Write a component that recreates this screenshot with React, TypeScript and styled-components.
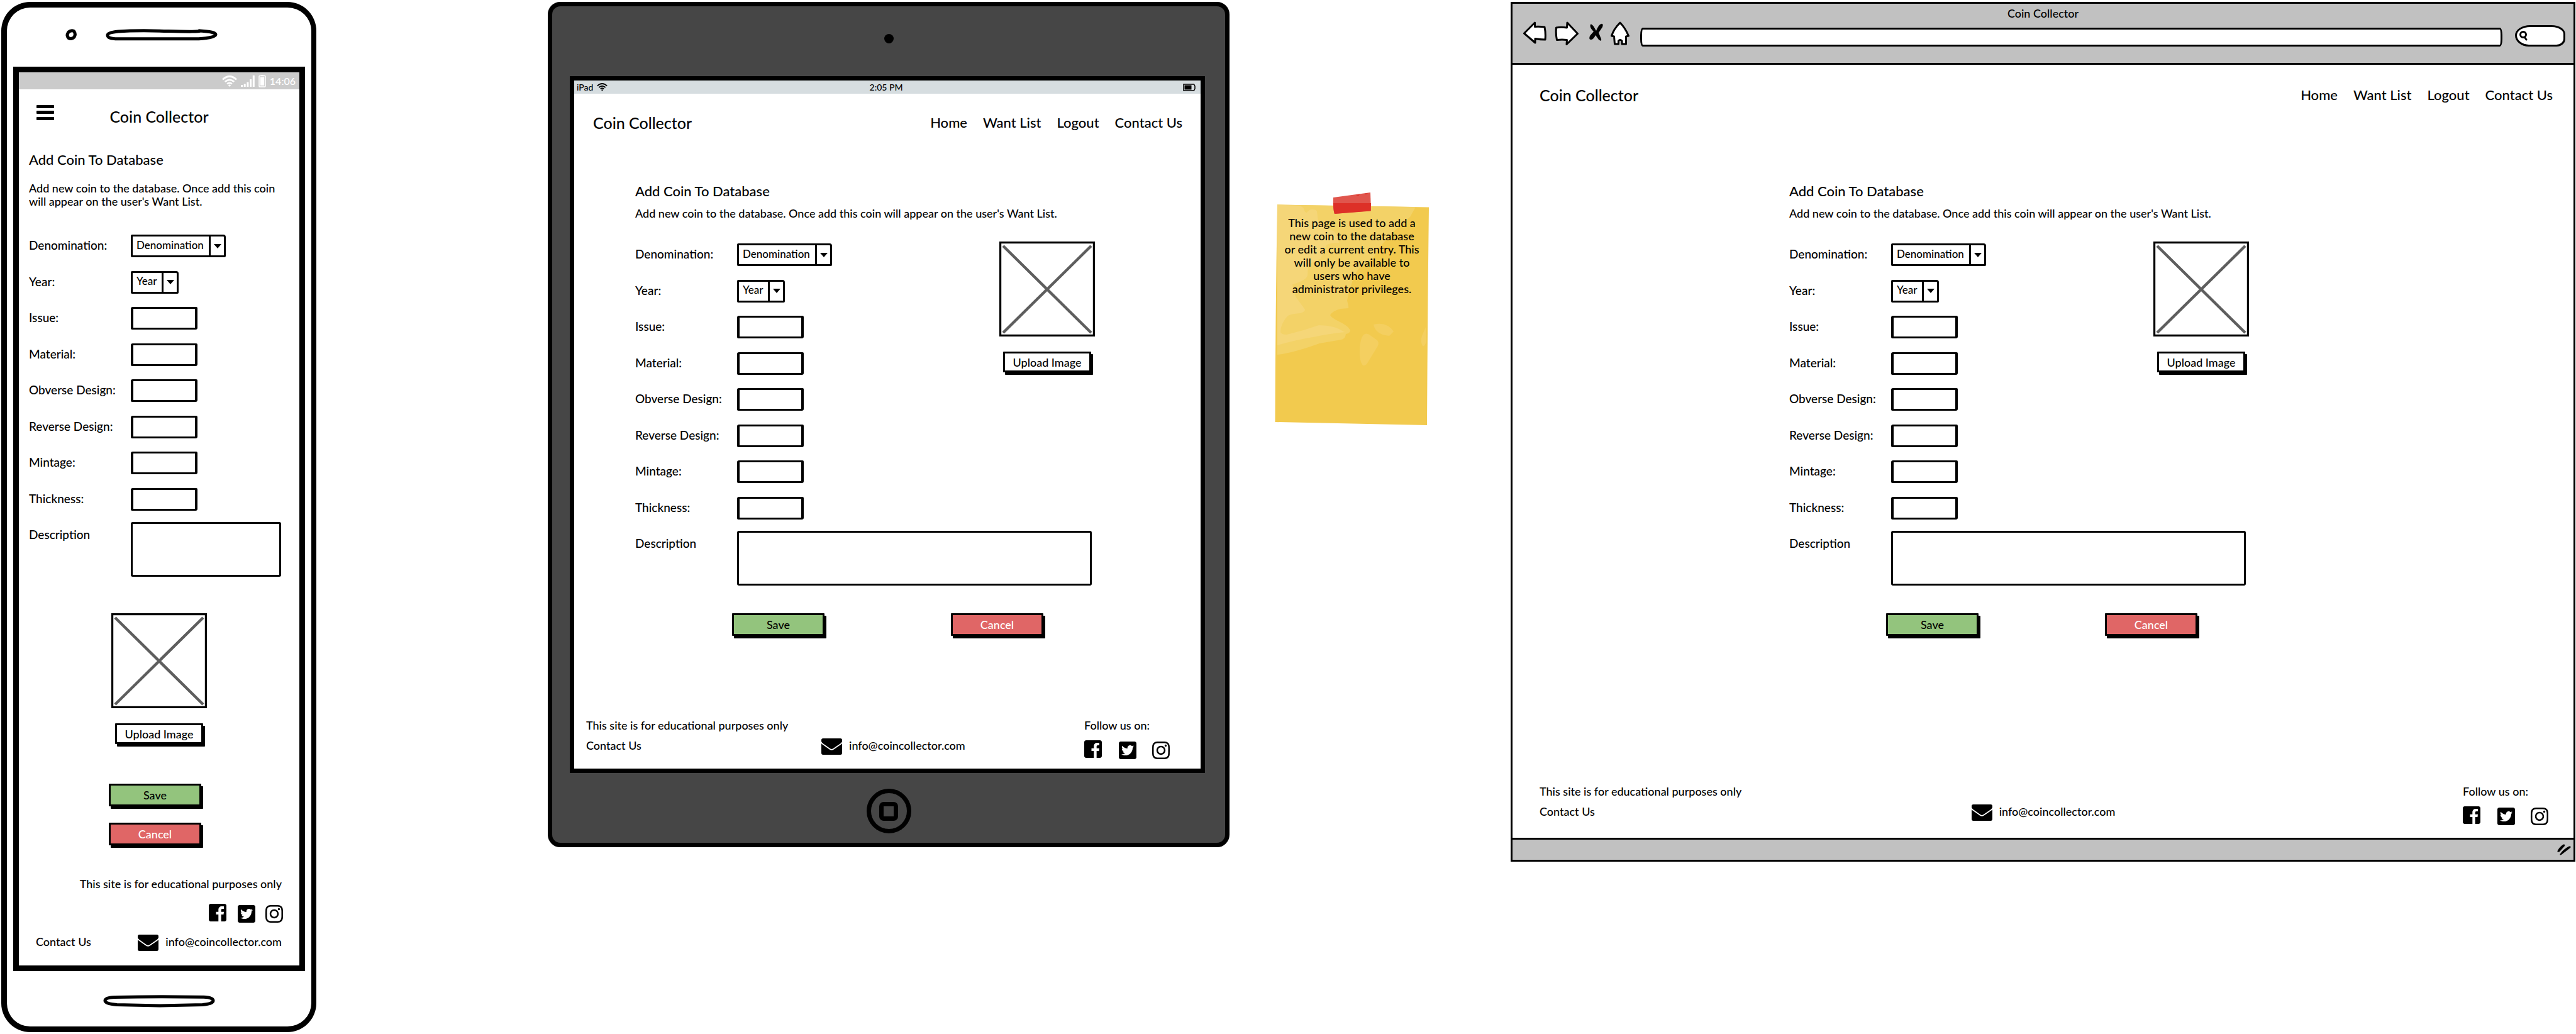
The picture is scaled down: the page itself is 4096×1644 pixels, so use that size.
import React, { useId } from 'react';
import styled, { createGlobalStyle, css } from 'styled-components';
import { FaInstagram, FaTwitterSquare } from 'react-icons/fa';

const ink = '#000';
const chrome = '#c1c1c1';

const GlobalStyle = createGlobalStyle`
  *, *::before, *::after { box-sizing: border-box; }
  body {
    margin: 0;
    background: #fff;
    color: ${ink};
    font: 500 18px/24px Lato, "Liberation Sans", sans-serif;
  }
  h1, h2, p { margin: 0; font-weight: 500; }
  svg { display: block; flex: none; }
  a { color: inherit; text-decoration: none; }
  button, input, select, textarea { font: inherit; color: inherit; margin: 0; }
`;

/* ---------- board ---------- */

const Board = styled.main`
  display: grid;
  grid-template-columns: 501fr 368fr 1084fr 72fr 245fr 130fr 1693fr;
  align-items: start;
  padding: 3px 1px 3px 2px;
`;

/* ---------- shared page parts ---------- */

const Brand = styled.h1`
  font-size: 25px;
  line-height: 36px;
  white-space: nowrap;
`;

const Heading = styled.h2`
  font-size: 22px;
  line-height: 26px;
`;

const Intro = styled.p<{ $gap: number }>`
  margin-top: ${p => p.$gap}px;
  line-height: 21px;
`;

const FieldRows = styled.div`
  display: grid;
  align-content: space-between;
  height: 439px;
`;

const Row = styled.div`
  display: grid;
  grid-template-columns: 162px minmax(0, 1fr);
  align-items: center;
  justify-items: start;
`;

const DescriptionRow = styled(Row)`
  align-items: start;
  margin-top: 18px;
`;

const Label = styled.label<{ $top?: boolean }>`
  font-size: 19px;
  white-space: nowrap;
  ${p => (p.$top ? css`padding-top: 8px;` : css`padding-bottom: 2px;`)}
`;

const TextInput = styled.input`
  width: 106px;
  height: 36px;
  padding: 0 8px;
  border: 4px solid ${ink};
  border-width: 3px 4px;
  border-radius: 3px 2px 3px 2px;
  background: #fff;
  outline: none;
`;

const TextArea = styled.textarea<{ $width: string }>`
  display: block;
  width: ${p => p.$width};
  height: 87px;
  padding: 8px;
  border: 3px solid ${ink};
  border-radius: 3px;
  background: #fff;
  resize: none;
  outline: none;
`;

const SelectBox = styled.div<{ $width: number }>`
  display: grid;
  grid-template-columns: 1fr 21px;
  width: ${p => p.$width}px;
  height: 36px;
  border: 3px solid ${ink};
  border-radius: 2px 4px 2px 2px;
`;

const NativeSelect = styled.select`
  grid-area: 1 / 1 / 2 / 3;
  width: 100%;
  padding: 0 0 3px 6px;
  border: 0;
  background: transparent;
  font-size: 17px;
  appearance: none;
  outline: none;
`;

const SelectArrow = styled.span`
  grid-area: 1 / 2 / 2 / 3;
  display: grid;
  place-items: center;
  margin-left: -3px;
  border-left: 3px solid ${ink};
  pointer-events: none;
`;

const tones = {
  plain: css`background: #fff; color: ${ink};`,
  save: css`background: #93c47d; color: ${ink};`,
  cancel: css`background: #e06666; color: #fff;`,
};

const Button = styled.button<{ $tone: keyof typeof tones }>`
  width: ${p => (p.$tone === 'plain' ? 140 : 147)}px;
  height: ${p => (p.$tone === 'plain' ? 33 : 36)}px;
  padding: 0;
  border: 3px solid ${ink};
  border-radius: 1px;
  box-shadow: 3px 4px 0 ${ink};
  line-height: 24px;
  white-space: nowrap;
  ${p => tones[p.$tone]}
`;

const Media = styled.div`
  display: flex;
  flex-direction: column;
  align-items: center;
  gap: 24px;
`;

const Social = styled.div<{ $gap: number }>`
  display: flex;
  gap: ${p => p.$gap}px;
`;

const IconLink = styled.a`
  display: grid;
  place-items: center;
  width: 28px;
  height: 28px;
`;

const Mail = styled.a`
  display: flex;
  gap: 11px;
  line-height: 22px;
`;

/* ---------- drawings ---------- */

const FacebookMark = () => (
  <svg width="28" height="28" viewBox="0 32 448 448" aria-hidden="true">
    <path d="M448 80v352c0 26.500-21.500 48-48 48h-85.300V302.800h60.600l8.700-67.600h-69.300V192c0-19.600 5.400-32.900 33.500-32.900H384V98.700c-6.200-.8-27.400-2.700-52.200-2.700-51.600 0-87 31.500-87 89.400v49.900H184v67.600h60.900V480H48c-26.500 0-48-21.500-48-48V80c0-26.500 21.500-48 48-48h352c26.500 0 48 21.500 48 48z" />
  </svg>
);

const EnvelopeMark = () => (
  <svg width="33" height="26" viewBox="0 0 99 72" preserveAspectRatio="none" aria-hidden="true">
    <rect width="99" height="72" rx="8" />
    <path d="M-2 15Q2 22 7 25L41 47Q49 52 57 47L92 25Q97 22 101 15" fill="none" stroke="#fff" strokeWidth="5" />
  </svg>
);

const WifiMark = ({ width, color }: { width: number; color: string }) => (
  <svg width={width} height={width * 0.75} viewBox="0 0 24 18" aria-hidden="true">
    <g fill="none" stroke={color} strokeWidth="2.700">
      <path d="M1 6.500Q12-3.500 23 6.500" />
      <path d="M4.700 10Q12 3.700 19.300 10" />
      <path d="M8.200 13.400Q12 10.200 15.800 13.400" />
    </g>
    <path d="M9.800 15.400Q12 13.600 14.200 15.400L12 18z" fill={color} />
  </svg>
);

const SignalMark = () => (
  <svg width="22" height="18" viewBox="0 0 22 18" fill="#fff" aria-hidden="true">
    <path d="M0 15h3v3H0zM4.700 13.500h3V18h-3zM9.400 10.500h3V18h-3zM14.100 6h3v12h-3zM18.800 0h3v18h-3z" />
  </svg>
);

const PhoneBatteryMark = () => (
  <svg width="12" height="21" viewBox="0 0 12 21" aria-hidden="true">
    <path d="M4 1h4v2H4z" fill="#fff" />
    <rect x="1" y="2.500" width="10" height="17.500" rx="1" fill="none" stroke="#fff" strokeWidth="1.500" />
    <rect x="2.800" y="4.500" width="6.400" height="13.500" fill="#fff" />
  </svg>
);

const TabletBatteryMark = () => (
  <svg width="20" height="12" viewBox="0 0 20 12" aria-hidden="true">
    <path d="M1 1h16.500l1.500 3v4l-1.500 3H1z" fill="none" stroke="#000" strokeWidth="1.500" />
    <rect x="2.500" y="2.500" width="11" height="7" />
  </svg>
);

const MenuMark = () => (
  <svg width="28" height="24" viewBox="0 0 28 24" aria-hidden="true">
    <rect width="28" height="5" rx="1" />
    <rect y="9" width="28" height="5" rx="1" />
    <rect y="19" width="28" height="5" rx="1" />
  </svg>
);

const PlaceholderImage = () => (
  <svg width="152" height="151" viewBox="0 0 152 151" role="img" aria-label="Coin image placeholder">
    <rect x="1.500" y="1.500" width="149" height="148" fill="#fff" stroke="#000" strokeWidth="3.400" />
    <path d="M6 7L146 145M146 7L6 145" stroke="#5e5e5e" strokeWidth="4.500" />
  </svg>
);

const EarpieceMark = () => (
  <svg width="178" height="19" viewBox="0 0 178 19" fill="none" stroke="#000" strokeWidth="5" aria-hidden="true">
    <path d="M20 4Q50 2 100 3.500T150 3Q175 4.500 175 9Q174 14 148 15.800H20Q3 16 3 10Q3 5.500 20 4z" />
  </svg>
);

const HomeBarMark = () => (
  <svg width="178" height="20" viewBox="0 0 178 20" fill="none" stroke="#000" strokeWidth="5" aria-hidden="true">
    <path d="M18 3.500Q90 2 160 3.300Q175 4 175 9Q175 14 158 15.500L90 17L22 15.500Q3 14 3 9Q3 4 18 3.500z" />
  </svg>
);

const PhoneCameraMark = () => (
  <svg width="18" height="18" viewBox="0 0 18 18" fill="none" stroke="#000" strokeWidth="5" aria-hidden="true">
    <path d="M5 5Q9 1.500 13.500 3.500Q17 8 14 13Q10 17 5 14.500Q1 10 5 5z" />
  </svg>
);

const BackMark = () => (
  <svg width="38" height="36" viewBox="0 0 38 36" fill="#fff" stroke="#000" strokeWidth="3" strokeLinejoin="round" aria-hidden="true">
    <path d="M1.500 19L18.500 2V8.500Q26 8 34 9Q36 19 35 29Q27 29 19 27.500V34Z" />
  </svg>
);

const ForwardMark = () => (
  <svg width="38" height="38" viewBox="0 0 38 38" fill="#fff" stroke="#000" strokeWidth="3" strokeLinejoin="round" aria-hidden="true">
    <path d="M36.500 19.500L20 2L19.500 10Q10 8.500 2.500 10Q1.500 20 3.500 29.500Q12 28.500 19.500 29.500L19 36.500Z" />
  </svg>
);

const StopMark = () => (
  <svg width="27" height="36" viewBox="0 0 27 36" aria-hidden="true">
    <path d="M7 5Q8 3 12 8L16 15Q20 5 24 4Q28 3 26 9L20 18L24 28Q25 33 20 29L15 22Q11 30 7 29Q4 29 6 23L12 16Q5 10 7 5z" />
  </svg>
);

const HomeMark = () => (
  <svg width="30" height="38" viewBox="0 0 30 38" fill="#fff" stroke="#000" strokeWidth="3" strokeLinejoin="round" aria-hidden="true">
    <path d="M15 2Q23 10 28.500 23L24.500 24V36H18V31Q15 28 12.500 31V36H6.500L5.500 24L1.500 23Q5 12 15 2z" />
  </svg>
);

const ResizeMark = () => (
  <svg width="22" height="18" viewBox="0 0 22 18" aria-hidden="true">
    <path d="M10 .5Q13 0 12 3L4 12Q0 14 .5 11Q4 4 10 .5zM19 3.500Q23 3 21 6L8 16Q4 19 4.500 16Q10 8 19 3.500z" />
  </svg>
);

/* ---------- form pieces ---------- */

const textFields = ['Issue:', 'Material:', 'Obverse Design:', 'Reverse Design:', 'Mintage:', 'Thickness:'];
const choices: [string, string, number][] = [
  ['Denomination:', 'Denomination', 151],
  ['Year:', 'Year', 76],
];

function CoinFields({ descriptionWidth, media }: { descriptionWidth: string; media?: React.ReactNode }) {
  const id = useId();
  return (
    <>
      <FormTop $split={Boolean(media)}>
        <FieldRows>
          {choices.map(([label, value, width]) => (
            <Row key={label}>
              <Label htmlFor={id + label}>{label}</Label>
              <SelectBox $width={width}>
                <NativeSelect id={id + label} defaultValue={value}>
                  <option>{value}</option>
                </NativeSelect>
                <SelectArrow>
                  <svg width="12" height="7" viewBox="0 0 12 7" aria-hidden="true"><path d="M0 0h12L6 7z" /></svg>
                </SelectArrow>
              </SelectBox>
            </Row>
          ))}
          {textFields.map(label => (
            <Row key={label}>
              <Label htmlFor={id + label}>{label}</Label>
              <TextInput id={id + label} type="text" />
            </Row>
          ))}
        </FieldRows>
        {media}
      </FormTop>
      <DescriptionRow>
        <Label $top htmlFor={id + 'description'}>Description</Label>
        <TextArea $width={descriptionWidth} id={id + 'description'} />
      </DescriptionRow>
    </>
  );
}

const FormTop = styled.div<{ $split: boolean }>`
  display: grid;
  grid-template-columns: ${p => (p.$split ? 'minmax(0, 1fr) 152px' : 'minmax(0, 1fr)')};
  ${FieldRows} { margin-top: 3px; }
`;

const CoinMedia = () => (
  <Media>
    <PlaceholderImage />
    <Button type="button" $tone="plain">Upload Image</Button>
  </Media>
);

const SocialLinks = ({ gap }: { gap: number }) => (
  <Social $gap={gap}>
    <IconLink href="#facebook" aria-label="Facebook"><FacebookMark /></IconLink>
    <IconLink href="#twitter" aria-label="Twitter"><FaTwitterSquare size={32} /></IconLink>
    <IconLink href="#instagram" aria-label="Instagram"><FaInstagram size={32} /></IconLink>
  </Social>
);

const MailLink = () => (
  <Mail href="mailto:info@coincollector.com"><EnvelopeMark />info@coincollector.com</Mail>
);

/* ---------- wide page (tablet and browser) ---------- */

const PageHeader = styled.header<{ $pad: string }>`
  display: flex;
  justify-content: space-between;
  align-items: center;
  padding: ${p => p.$pad};
`;

const Nav = styled.nav`
  display: flex;
  gap: 25px;
  font-size: 22px;
  line-height: 36px;
  white-space: nowrap;
`;

const WideForm = styled.form<{ $pad: string }>`
  padding: ${p => p.$pad};
  > * { max-width: 731px; }
  ${FormTop} { margin-top: 34px; }
`;

const Actions = styled.div`
  display: flex;
  gap: 201px;
  margin-top: 44px;
  padding-left: 154px;
`;

const PageFooter = styled.footer<{ $pad: string; $columns: string }>`
  display: grid;
  grid-template-columns: ${p => p.$columns};
  align-items: start;
  padding: ${p => p.$pad};
  ${Mail} { margin-top: 33px; }
`;

const FooterNotes = styled.div`
  display: grid;
  gap: 8px;
  justify-items: start;
  white-space: nowrap;
`;

const Follow = styled.div`
  display: grid;
  gap: 12px;
  justify-self: end;
`;

interface WideProps { header: string; form: string; footer: string; columns: string }

function WidePage({ header, form, footer, columns }: WideProps) {
  return (
    <>
      <PageHeader $pad={header}>
        <Brand>Coin Collector</Brand>
        <Nav>
          {['Home', 'Want List', 'Logout', 'Contact Us'].map(item => <a key={item} href="#">{item}</a>)}
        </Nav>
      </PageHeader>
      <WideForm $pad={form}>
        <Heading>Add Coin To Database</Heading>
        <Intro $gap={12}>Add new coin to the database. Once add this coin will appear on the user's Want List.</Intro>
        <CoinFields descriptionWidth="564px" media={<CoinMedia />} />
        <Actions>
          <Button type="button" $tone="save">Save</Button>
          <Button type="button" $tone="cancel">Cancel</Button>
        </Actions>
      </WideForm>
      <PageFooter $pad={footer} $columns={columns}>
        <FooterNotes>
          <p>This site is for educational purposes only</p>
          <a href="#">Contact Us</a>
        </FooterNotes>
        <MailLink />
        <Follow>
          <p>Follow us on:</p>
          <SocialLinks gap={25} />
        </Follow>
      </PageFooter>
    </>
  );
}

/* ---------- phone ---------- */

const PhoneBody = styled.section`
  grid-column: 1;
  padding: 0 10px;
  border: 9px solid ${ink};
  border-right-width: 8px;
  border-radius: 46px;
  background: #fff;
`;

const PhoneTop = styled.div`
  display: flex;
  gap: 46px;
  height: 94px;
  padding: 34px 0 0 83px;
`;

const PhoneBottom = styled.div`
  display: flex;
  justify-content: center;
  height: 88px;
  padding-top: 38px;
`;

const PhoneScreen = styled.div`
  border: 9px solid ${ink};
`;

const PhoneStatus = styled.div`
  display: flex;
  justify-content: flex-end;
  align-items: center;
  gap: 6px;
  height: 27px;
  padding-right: 6px;
  background: #cbcbcb;
  color: #fff;
  font-size: 16px;
`;

const PhoneHeader = styled.header`
  display: grid;
  grid-template-columns: 1fr auto 1fr;
  align-items: start;
  padding: 25px 28px 0;
`;

const MenuButton = styled.button`
  justify-self: start;
  padding: 0;
  border: 0;
  background: none;
`;

const PhoneForm = styled.form`
  padding-top: 38px;
  ${FormTop} { margin-top: 39px; }
`;

const PhoneFields = styled.div`
  padding: 0 29px 0 16px;
`;

const PhoneMedia = styled.div`
  padding-top: 58px;
`;

const PhoneActions = styled.div`
  display: flex;
  flex-direction: column;
  align-items: center;
  gap: 26px;
  padding: 63px 29px 0 16px;
`;

const PhoneFooter = styled.footer`
  display: flex;
  flex-direction: column;
  align-items: flex-end;
  padding: 49px 28px 23px 27px;
  ${Social} { margin-top: 20px; }
`;

const PhoneContact = styled.div`
  display: flex;
  justify-content: space-between;
  align-self: stretch;
  margin-top: 21px;
  line-height: 22px;
`;

function Phone() {
  return (
    <PhoneBody>
      <PhoneTop><PhoneCameraMark /><EarpieceMark /></PhoneTop>
      <PhoneScreen>
        <PhoneStatus>
          <WifiMark width={24} color="#fff" /><SignalMark /><PhoneBatteryMark /><span>14:06</span>
        </PhoneStatus>
        <PhoneHeader>
          <MenuButton type="button" aria-label="Menu"><MenuMark /></MenuButton>
          <Brand>Coin Collector</Brand>
        </PhoneHeader>
        <PhoneForm>
          <PhoneFields>
            <Heading>Add Coin To Database</Heading>
            <Intro $gap={22}>Add new coin to the database. Once add this coin will appear on the user's Want List.</Intro>
            <CoinFields descriptionWidth="100%" />
          </PhoneFields>
          <PhoneMedia><CoinMedia /></PhoneMedia>
          <PhoneActions>
            <Button type="button" $tone="save">Save</Button>
            <Button type="button" $tone="cancel">Cancel</Button>
          </PhoneActions>
        </PhoneForm>
        <PhoneFooter>
          <p>This site is for educational purposes only</p>
          <SocialLinks gap={16} />
          <PhoneContact>
            <a href="#">Contact Us</a>
            <MailLink />
          </PhoneContact>
        </PhoneFooter>
      </PhoneScreen>
      <PhoneBottom><HomeBarMark /></PhoneBottom>
    </PhoneBody>
  );
}

/* ---------- tablet ---------- */

const TabletBody = styled.section`
  grid-column: 3;
  padding: 0 32px 0 28px;
  border: 7px solid ${ink};
  border-radius: 20px;
  background: #464646;
`;

const TabletTop = styled.div`
  display: grid;
  justify-content: center;
  height: 111px;
  padding: 44px 0 0 4px;
`;

const TabletLens = styled.span`
  width: 15px;
  height: 19px;
  height: 15px;
  border-radius: 50%;
  background: ${ink};
`;

const TabletScreen = styled.div`
  border: 7px solid ${ink};
  background: #fff;
`;

const TabletStatus = styled.div`
  display: grid;
  grid-template-columns: 1fr auto 1fr;
  align-items: center;
  height: 21px;
  padding: 0 8px 0 4px;
  background: #d6dde0;
  font-size: 14px;
  line-height: 20px;
`;

const Carrier = styled.span`
  display: flex;
  align-items: center;
  gap: 6px;
`;

const StatusEnd = styled.span`
  justify-self: end;
`;

const TabletBottom = styled.div`
  display: grid;
  justify-content: center;
  height: 111px;
  padding: 25px 0 0 4px;
`;

const HomeButton = styled.button`
  display: grid;
  place-items: center;
  width: 71px;
  height: 71px;
  padding: 0;
  border: 7px solid ${ink};
  border-radius: 50%;
  background: none;
`;

const HomeSquare = styled.span`
  width: 30px;
  height: 30px;
  border: 7px solid ${ink};
  border-radius: 7px;
`;

function Tablet() {
  return (
    <TabletBody>
      <TabletTop><TabletLens /></TabletTop>
      <TabletScreen>
        <TabletStatus>
          <Carrier>iPad<WifiMark width={17} color="#000" /></Carrier>
          <span>2:05 PM</span>
          <StatusEnd><TabletBatteryMark /></StatusEnd>
        </TabletStatus>
        <WidePage header="28px 29px 0 30px" form="78px 20px 0 97px" footer="130px 51px 17px 19px" columns="374px auto 1fr" />
      </TabletScreen>
      <TabletBottom>
        <HomeButton type="button" aria-label="Home"><HomeSquare /></HomeButton>
      </TabletBottom>
    </TabletBody>
  );
}

/* ---------- sticky note ---------- */

const Note = styled.aside`
  grid-column: 5;
  display: grid;
  justify-items: center;
  margin-top: 303px;
  > * { grid-area: 1 / 1; }
`;

const NoteText = styled.p`
  max-width: 216px;
  padding-top: 38px;
  line-height: 21px;
  text-align: center;
`;

function StickyNote() {
  return (
    <Note>
      <svg width="245" height="371" viewBox="0 0 245 371" aria-hidden="true">
        <path d="M4 19.500L245 23.500Q243 190 242 370L.5 365Q1 190 4 19.500z" fill="#f2ca4e" />
        <path d="M4 19.500L224 23L215 39L188 63L165 89Q160 100 156 105Q138 116 132 123Q124 135 122 146Q117 160 115 172Q118 183 117 184L105 185Q92 188 88 195Q90 199 100 204Q117 212 120 219Q120 224 113 225Q112 233 106 234L71 240Q30 255 4 258z" fill="#f3d267" />
        <path d="M4 19.500L40 21Q47 24 47 29Q49 33 51 32Q56 26 60 27Q66 27 67 30L69 46Q73 55 93 61Q100 66 102 80Q86 80 82 84Q78 95 73 105Q58 112 53 115L52 132Q50 140 28 146Q29 158 34 167L48 186Q48 190 40 192Q25 193 21 196Q10 207 9 221Q9 226 19 226Q45 220 70 211Q95 211 111 222Q85 225 66 229Q30 235 4 243z" fill="#f5d678" />
        <path d="M157 210Q178 205 189 221L182 228Q160 226 157 210zM143 225Q148 223 153 228L163 235Q167 240 162 247L148 270Q145 276 140 275Q134 268 135 249Q136 229 143 225zM240 214L241 237Q238 246 235 244Q231 237 234 228z" fill="#f4cf60" />
        <path d="M93 8L152 0L153 29L95 34Q92 26 93 8z" fill="#e0554c" />
        <path d="M93 17H153L152.500 29.500L95 34Q93 28 93 17zM129 4l6-1q-1 3-4 2zM143 2l5-1q-1 2-4 2z" fill="#dd3027" />
      </svg>
      <NoteText>
        This page is used to add a new coin to the database or edit a current entry. This will only be available to users who have administrator privileges.
      </NoteText>
    </Note>
  );
}

/* ---------- browser ---------- */

const BrowserBody = styled.section`
  grid-column: 7;
  border: 3px solid ${ink};
  background: #fff;
`;

const Toolbar = styled.header`
  height: 97px;
  padding-top: 3px;
  border-bottom: 3px solid ${ink};
  background: ${chrome};
`;

const WindowTitle = styled.p`
  text-align: center;
`;

const ToolbarRow = styled.div`
  display: flex;
  align-items: flex-end;
  height: 41px;
  padding: 0 13px 0 17px;
`;

const NavButtons = styled.div`
  display: flex;
  align-items: flex-start;
  align-self: flex-start;
  gap: 12px;
  padding-top: 1px;
  margin-right: 17px;
`;

const NavButton = styled.button`
  padding: 0;
  border: 0;
  background: none;
`;

const AddressInput = styled.input`
  flex: 1;
  min-width: 0;
  height: 30px;
  padding: 0 8px;
  border: 3px solid ${ink};
  border-radius: 4px / 12px;
  background: #fff;
  outline: none;
`;

const SearchBox = styled.label`
  display: flex;
  align-items: center;
  width: 80px;
  height: 34px;
  margin-left: 20px;
  padding-left: 3px;
  border: 3px solid ${ink};
  border-radius: 24px 22px 14px 22px / 16px 14px 12px 18px;
  background: #fff;
`;

const SearchInput = styled.input`
  flex: 1;
  min-width: 0;
  padding: 0 4px;
  border: 0;
  background: transparent;
  outline: none;
`;

const WindowFoot = styled.footer`
  display: flex;
  justify-content: flex-end;
  align-items: center;
  height: 35px;
  padding-right: 4px;
  border-top: 3px solid ${ink};
  background: ${chrome};
`;

function Browser() {
  return (
    <BrowserBody>
      <Toolbar>
        <WindowTitle>Coin Collector</WindowTitle>
        <ToolbarRow>
          <NavButtons>
            <NavButton type="button" aria-label="Back"><BackMark /></NavButton>
            <NavButton type="button" aria-label="Forward"><ForwardMark /></NavButton>
            <NavButton type="button" aria-label="Stop"><StopMark /></NavButton>
            <NavButton type="button" aria-label="Home"><HomeMark /></NavButton>
          </NavButtons>
          <AddressInput type="text" aria-label="Address" />
          <SearchBox>
            <svg width="14" height="16" viewBox="0 0 14 16" fill="none" stroke="#000" strokeWidth="3" strokeLinecap="round" aria-hidden="true">
              <ellipse cx="7" cy="6" rx="4.500" ry="4.500" />
              <path d="M9.500 10.500L12 14" />
            </svg>
            <SearchInput type="text" aria-label="Search" />
          </SearchBox>
        </ToolbarRow>
      </Toolbar>
      <WidePage header="30px 33px 0 43px" form="122px 20px 0 440px" footer="235px 42px 22px 43px" columns="1fr auto 1fr" />
      <WindowFoot><ResizeMark /></WindowFoot>
    </BrowserBody>
  );
}

export default function App() {
  return (
    <>
      <GlobalStyle />
      <Board>
        <Phone />
        <Tablet />
        <StickyNote />
        <Browser />
      </Board>
    </>
  );
}
